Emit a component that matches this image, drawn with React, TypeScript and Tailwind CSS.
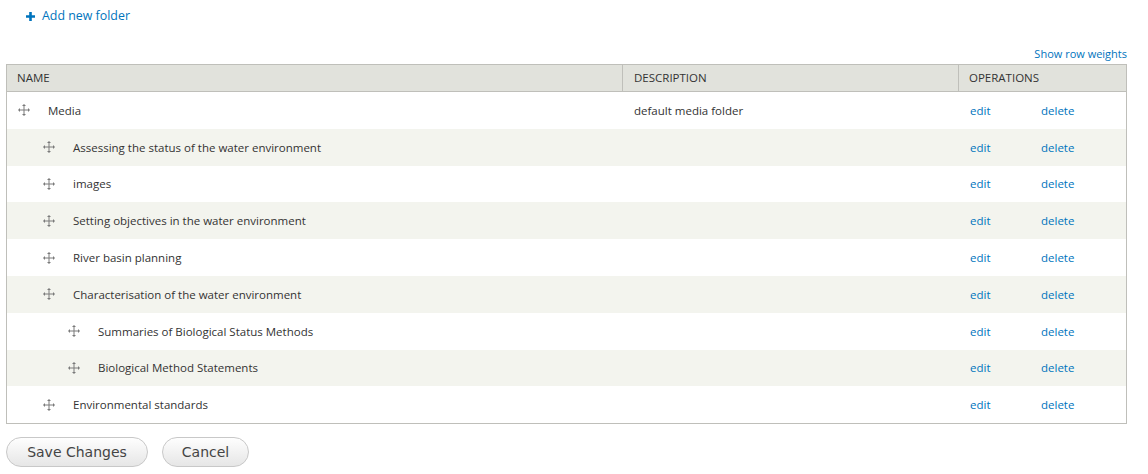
import React from 'react';

type Folder = { name: string; depth: number; description?: string };

const folders: Folder[] = [
  { name: 'Media', depth: 0, description: 'default media folder' },
  { name: 'Assessing the status of the water environment', depth: 1 },
  { name: 'images', depth: 1 },
  { name: 'Setting objectives in the water environment', depth: 1 },
  { name: 'River basin planning', depth: 1 },
  { name: 'Characterisation of the water environment', depth: 1 },
  { name: 'Summaries of Biological Status Methods', depth: 2 },
  { name: 'Biological Method Statements', depth: 2 },
  { name: 'Environmental standards', depth: 1 },
];

const indentClass = ['pl-[11px]', 'pl-[36px]', 'pl-[61px]'];

function DragHandle() {
  return (
    <svg width="12" height="12" viewBox="0 0 12 12" className="shrink-0 text-[#7a7a7a]">
      <path d="M6 1v10M1 6h10" stroke="currentColor" strokeWidth="1" fill="none" />
      <path d="M6 0l-2 2h4zM6 12l-2-2h4zM0 6l2-2v4zM12 6l-2-2v4z" fill="currentColor" />
    </svg>
  );
}

export default function App() {
  return (
    <div className="w-[1148px] h-[474px] bg-white font-['Open_Sans',sans-serif] text-[#333] text-[11.5px] overflow-hidden">
      <div className="flex items-center gap-[7px] pl-[26px] pt-[10px] h-[23px] text-[#0074bd] text-[12.4px]">
        <svg width="9" height="9" viewBox="0 0 9 9">
          <path d="M3.2 0h2.6v3.2H9v2.6H5.8V9H3.2V5.8H0V3.2h3.2z" fill="#0074bd" />
        </svg>
        <span>Add new folder</span>
      </div>

      <div className="flex items-center justify-end pr-[21px] mt-[22px] h-[19px] text-[11px] text-[#0074bd]">
        Show row weights
      </div>

      <div className="ml-[6px] w-[1121px] border border-[#bfbfba]">
        <div className="flex h-[27px] items-center bg-[#e1e2dc] border-b border-[#bfbfba] text-[11.5px] uppercase">
          <div className="w-[615px] pl-[10px]">Name</div>
          <div className="w-[336px] h-full flex items-center pl-[11px] border-l border-[#bfbfba]">Description</div>
          <div className="flex-1 h-full flex items-center pl-[10px] border-l border-[#bfbfba]">Operations</div>
        </div>
        {folders.map((f, i) => (
          <div
            key={f.name}
            className={`flex items-center h-[36.8px] ${i % 2 === 1 ? 'bg-[#f3f4ee]' : 'bg-white'}`}
          >
            <div className={`w-[616px] flex items-center gap-[18px] ${indentClass[f.depth]}`}>
              <DragHandle />
              <span>{f.name}</span>
            </div>
            <div className="w-[336px] pl-[11px]">{f.description ?? ''}</div>
            <div className="flex-1 flex pl-[11px] text-[#0074bd]">
              <span className="w-[71px]">edit</span>
              <span>delete</span>
            </div>
          </div>
        ))}
      </div>

      <div className="flex gap-[14px] ml-[6px] mt-[13px] font-['DejaVu_Sans',sans-serif] text-[14px] text-[#444]">
        <button className="h-[30px] w-[142px] rounded-full border border-[#c8c8c8] bg-gradient-to-b from-[#fefefe] to-[#e6e6e6]">
          Save Changes
        </button>
        <button className="h-[30px] w-[87px] rounded-full border border-[#c8c8c8] bg-gradient-to-b from-[#fefefe] to-[#e6e6e6]">
          Cancel
        </button>
      </div>
    </div>
  );
}
